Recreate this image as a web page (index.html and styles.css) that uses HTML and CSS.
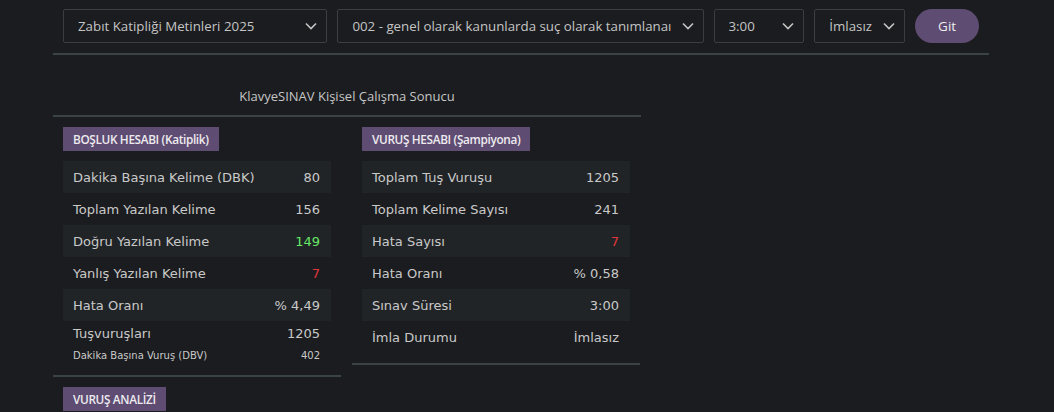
FILE: index.html
```html
<!DOCTYPE html>
<html lang="tr">
<head>
<meta charset="utf-8">
<link rel="stylesheet" href="styles.css">
</head>
<body>
<div class="page">
  <div class="toolbar">
    <div class="select s1"><span class="sel-text">Zabıt Katipliği Metinleri 2025</span><svg class="chev" viewBox="0 0 12 8" width="12" height="8"><path d="M1 1.5 6 6.5 11 1.5" fill="none" stroke="#c4c4c4" stroke-width="1.6"/></svg></div>
    <div class="select s2"><span class="sel-text">002 - genel olarak kanunlarda suç olarak tanımlanaı</span><svg class="chev" viewBox="0 0 12 8" width="12" height="8"><path d="M1 1.5 6 6.5 11 1.5" fill="none" stroke="#c4c4c4" stroke-width="1.6"/></svg></div>
    <div class="select s3"><span class="sel-text">3:00</span><svg class="chev" viewBox="0 0 12 8" width="12" height="8"><path d="M1 1.5 6 6.5 11 1.5" fill="none" stroke="#c4c4c4" stroke-width="1.6"/></svg></div>
    <div class="select s4"><span class="sel-text">İmlasız</span><svg class="chev" viewBox="0 0 12 8" width="12" height="8"><path d="M1 1.5 6 6.5 11 1.5" fill="none" stroke="#c4c4c4" stroke-width="1.6"/></svg></div>
    <button class="btn-go">Git</button>
  </div>

  <div class="result">
    <div class="title">KlavyeSINAV Kişisel Çalışma Sonucu</div>
    <div class="cols">
      <div class="col">
        <div class="badge">BOŞLUK HESABI (Katiplik)</div>
        <table class="stats">
          <tr class="odd"><td>Dakika Başına Kelime (DBK)</td><td class="v">80</td></tr>
          <tr><td>Toplam Yazılan Kelime</td><td class="v">156</td></tr>
          <tr class="odd"><td>Doğru Yazılan Kelime</td><td class="v green">149</td></tr>
          <tr><td>Yanlış Yazılan Kelime</td><td class="v red">7</td></tr>
          <tr class="odd"><td>Hata Oranı</td><td class="v">% 4,49</td></tr>
          <tr class="tus"><td>Tuşvuruşları</td><td class="v">1205</td></tr>
          <tr class="small"><td>Dakika Başına Vuruş (DBV)</td><td class="v">402</td></tr>
        </table>
      </div>
      <div class="col">
        <div class="badge">VURUŞ HESABI (Şampiyona)</div>
        <table class="stats">
          <tr class="odd"><td>Toplam Tuş Vuruşu</td><td class="v">1205</td></tr>
          <tr><td>Toplam Kelime Sayısı</td><td class="v">241</td></tr>
          <tr class="odd"><td>Hata Sayısı</td><td class="v red">7</td></tr>
          <tr><td>Hata Oranı</td><td class="v">% 0,58</td></tr>
          <tr class="odd"><td>Sınav Süresi</td><td class="v">3:00</td></tr>
          <tr><td>İmla Durumu</td><td class="v">İmlasız</td></tr>
        </table>
      </div>
    </div>
    <div class="col analiz">
      <div class="badge">VURUŞ ANALİZİ</div>
    </div>
  </div>
</div>
</body>
</html>
```

FILE: styles.css
```css
html, body {
  margin: 0;
  padding: 0;
  background: #1b1c1f;
  color: #c9c9c9;
  overflow: hidden;
}
.page {
  width: 936px;
  margin-left: 53px;
}
.toolbar {
  display: flex;
  gap: 10px;
  padding: 9px 10px 10px;
  border-bottom: 2px solid #3a4442;
}
.select {
  box-sizing: border-box;
  height: 34px;
  border: 1px solid #3c3d40;
  border-radius: 2px;
  display: flex;
  align-items: center;
  justify-content: space-between;
  padding: 0 9px 0 14px;
  font-family: "Open Sans", sans-serif;
  font-size: 13.3px;
  color: #c4c4c4;
}
.sel-text { white-space: nowrap; overflow: hidden; }
.chev { flex: none; margin-left: 8px; }
.s1 { width: 265px; }
.s2 { width: 367px; }
.s3 { width: 91px; }
.s4 { width: 91px; }
.btn-go {
  width: 64px;
  height: 34px;
  border: none;
  border-radius: 17px;
  background: #5f4c73;
  color: #eeeeee;
  font-family: "Open Sans", sans-serif;
  font-size: 13.5px;
  padding: 0;
}
.result {
  width: 588px;
}
.title {
  text-align: center;
  font-family: "Open Sans", sans-serif;
  font-size: 13px;
  color: #c6c6c6;
  padding: 32px 0 10px;
  border-bottom: 2px solid #3a4442;
}
.cols {
  display: flex;
  align-items: flex-start;
  gap: 11px;
}
.col {
  width: 288px;
  box-sizing: border-box;
  padding: 10px 10px 10px;
  border-bottom: 2px solid #3a4442;
}
.col.analiz { border-bottom: none; padding-top: 10px; }
.badge {
  display: inline-block;
  background: #5f4c73;
  color: #ecebee;
  font-family: "Open Sans", sans-serif;
  font-weight: 600;
  font-size: 11.8px;
  letter-spacing: -0.35px;
  height: 24px;
  line-height: 24px;
  padding: 0 10px;
  vertical-align: top;
}
.stats {
  width: 100%;
  table-layout: fixed;
  border-collapse: collapse;
  margin-top: 10px;
  font-family: "DejaVu Sans", Verdana, sans-serif;
  font-size: 13px;
  color: #c9c9c9;
}
.stats td {
  height: 32px;
  padding: 0 10px;
  white-space: nowrap;
}
.stats td:first-child { width: 190px; }
.stats tr.odd td { background: #212427; }
.stats td.v { text-align: right; padding-left: 0; padding-right: 11px; }
.green { color: #66e866; }
.red { color: #e2343a; }
.stats tr.tus td { height: 24px; }
.stats tr.small td { font-size: 10px; height: 20px; }
```
